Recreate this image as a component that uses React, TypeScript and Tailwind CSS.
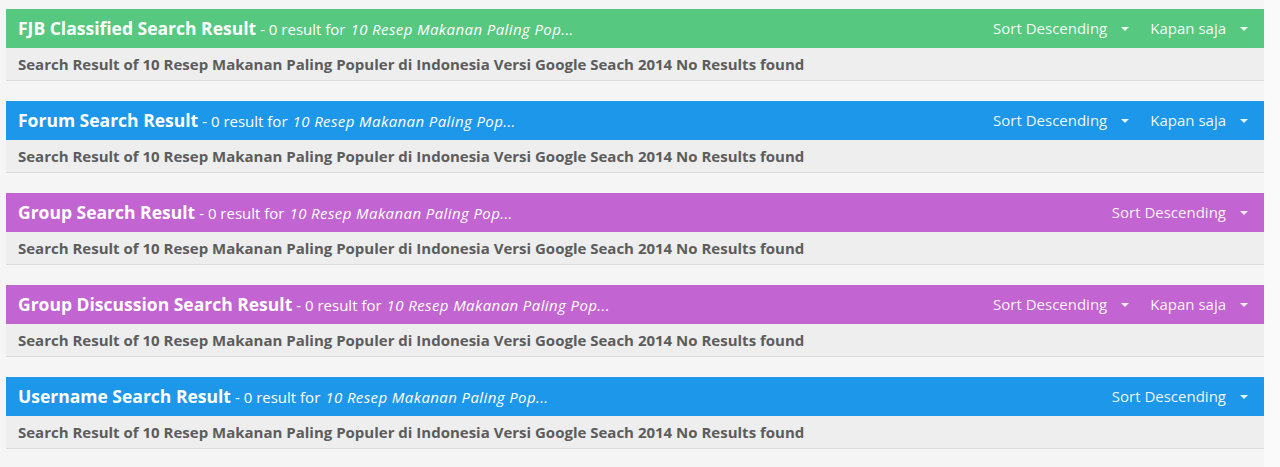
import React from 'react';

type Section = {
  title: string;
  color: string;
  showTime: boolean;
};

const sections: Section[] = [
  { title: 'FJB Classified Search Result', color: 'bg-[#57c87f]', showTime: true },
  { title: 'Forum Search Result', color: 'bg-[#1d97e9]', showTime: true },
  { title: 'Group Search Result', color: 'bg-[#c264d1]', showTime: false },
  { title: 'Group Discussion Search Result', color: 'bg-[#c264d1]', showTime: true },
  { title: 'Username Search Result', color: 'bg-[#1d97e9]', showTime: false },
];

const Caret = () => (
  <span className="ml-[14px] inline-block h-0 w-0 border-x-[4px] border-t-[4px] border-x-transparent border-t-white/90" />
);

const Dropdown = ({ label }: { label: string }) => (
  <div className="flex items-center text-[15px] text-white/95">
    <span>{label}</span>
    <Caret />
  </div>
);

const SearchPanel = ({ section }: { section: Section }) => (
  <div className="mb-[20px]">
    <div className={`${section.color} flex h-[39px] items-center justify-between pl-[12px] pr-[16px] text-white`}>
      <div className="flex items-baseline whitespace-nowrap">
        <span className="text-[17.5px] font-bold">{section.title}</span>
        <span className="ml-[4px] text-[15px]">- 0 result for</span>
        <span className="ml-[5px] text-[15px] italic tracking-[0.4px]">10 Resep Makanan Paling Pop...</span>
      </div>
      <div className="flex items-center gap-[21px]">
        <Dropdown label="Sort Descending" />
        {section.showTime && <Dropdown label="Kapan saja" />}
      </div>
    </div>
    <div className="flex h-[33px] items-center border-b border-[#dcdcdc] bg-[#eeeeee] pl-[12px] pt-[1px] text-[15px] font-bold text-[#5c5c5c]">
      Search Result of 10 Resep Makanan Paling Populer di Indonesia Versi Google Seach 2014 No Results found
    </div>
  </div>
);

export default function App() {
  return (
    <div
      className="flex h-[467px] w-full overflow-hidden bg-[#fafafa]"
      style={{ fontFamily: '"Open Sans", "Noto Sans", sans-serif' }}
    >
      <div className="w-[1264px] shrink-0 bg-[#f5f5f5] pl-[6px] pt-[9px]">
        {sections.map((s) => (
          <SearchPanel key={s.title} section={s} />
        ))}
      </div>
    </div>
  );
}
